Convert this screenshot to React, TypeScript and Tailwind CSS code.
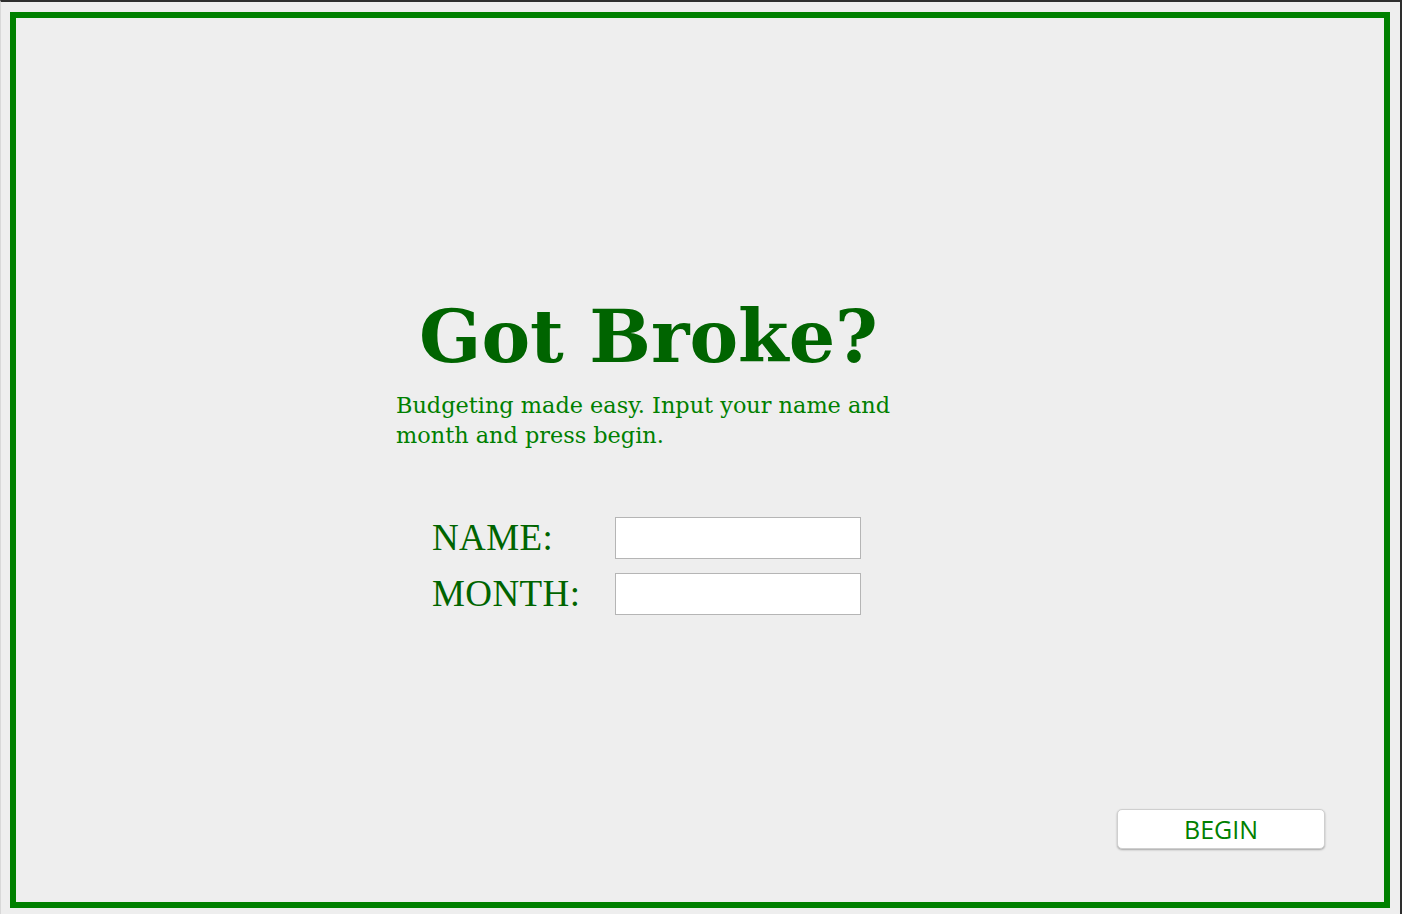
import React from "react";

export default function App() {
  return (
    <div className="w-[1402px] h-[914px] bg-[#eeeeee] border-t-2 border-t-[#2e2e2e] border-r-2 border-r-[#2e2e2e] border-l border-l-[#d8d8d8] pt-[10px] pl-[9px] pr-[10px] pb-[6px] box-border overflow-hidden">
      <div className="w-full h-full border-[6px] border-[#008000] bg-[#eeeeee] box-border flex flex-col">
        <div className="ml-[380px] w-[505px] pt-[282px]">
          <h1
            className="text-center text-[73px] leading-[73px] font-bold text-[#006400] whitespace-nowrap"
            style={{ fontFamily: '"DejaVu Serif", Georgia, serif' }}
          >
            Got Broke?
          </h1>
          <p
            className="mt-[17px] text-[22.4px] leading-[30px] text-[#008000] whitespace-nowrap"
            style={{ fontFamily: '"DejaVu Serif", Georgia, serif' }}
          >
            Budgeting made easy. Input your name and
            <br />
            month and press begin.
          </p>
        </div>
        <div className="ml-[416px] mt-[67px] grid grid-cols-[183px_246px] gap-y-[14px] items-center">
          <span
            className="text-[37px] leading-[42px] tracking-[0.4px] text-[#006400]"
            style={{ fontFamily: '"Liberation Serif", "Times New Roman", serif' }}
          >
            NAME:
          </span>
          <input className="h-[42px] w-[246px] bg-white border border-[#b5b5b5] outline-none" />
          <span
            className="text-[37px] leading-[42px] tracking-[0.4px] text-[#006400]"
            style={{ fontFamily: '"Liberation Serif", "Times New Roman", serif' }}
          >
            MONTH:
          </span>
          <input className="h-[42px] w-[246px] bg-white border border-[#b5b5b5] outline-none" />
        </div>
        <div className="mt-auto mb-[53px] mr-[59px] flex justify-end">
          <button
            className="w-[208px] h-[40px] bg-white rounded-[5px] border border-[#cfcfcf] shadow-[0_1px_2px_rgba(0,0,0,0.3)] text-[#008000] text-[25px] leading-[36px]"
            style={{ fontFamily: '"Open Sans", "Noto Sans", sans-serif' }}
          >
            BEGIN
          </button>
        </div>
      </div>
    </div>
  );
}
